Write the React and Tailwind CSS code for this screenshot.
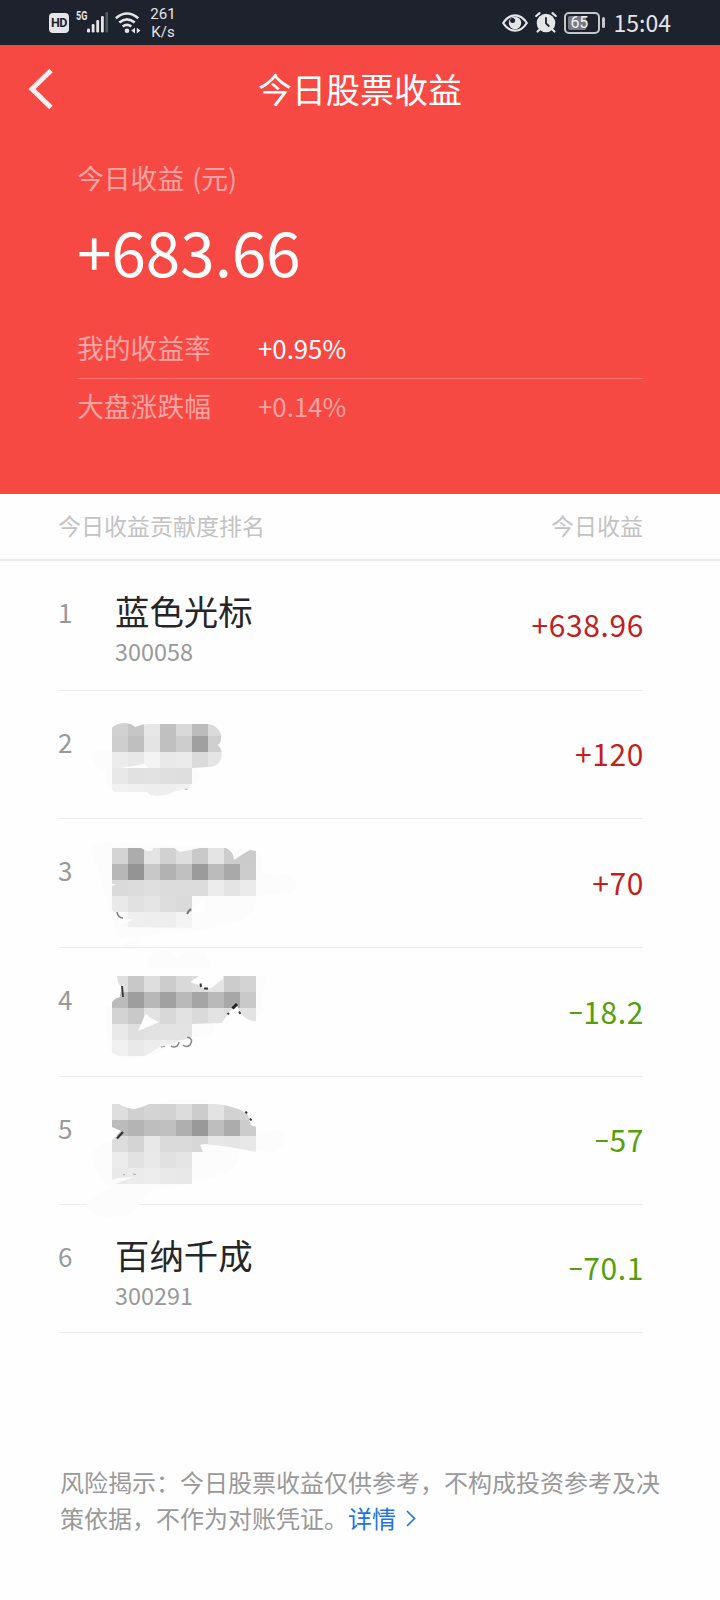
const MOSAICS = {
  2: {
    top: 691,
    height: 127,
    smudges: ["M92 752Q96 750 112 750L196 768Q204 776 196 784L112 790Q104 784 106 772Q92 766 92 752Z"],
    clip: "M112 728Q116 723 126 723Q133 724 135 727Q142 724 148 724L208 724Q218 725 221 735Q222 742 218 745Q223 750 221 759Q218 767 208 767L192 768L192 784L187 789L176 791Q168 795 158 796Q150 796 147 792L114 792L112 790Z",
    holes: ["M120 768L145 764L148 768Z"],
    rows: [
      [720, "#d1d1d1 #c6c6c6 #e7e7e7 #c0c0c0 #d9d9d9 #bcbcbc #dadada"],
      [736, "#cecece #bfbfbf #e4e4e4 #c0c0c0 #cdcdcd #a0a0a0 #cfcfcf"],
      [752, "#ececec #e8e8e8 #f4f4f4 #e9e9e9 #ebebeb #dbdbdb #e5e5e5"],
      [768, "#e8e8e8 #e1e1e1 #e2e2e2 #dfdfdf #dedede #fafafa #fafafa"],
      [784, "#f2f2f2 #f0f0f0 #eeeeee #eeeeee #f1f1f1 #fcfcfc #fcfcfc"],
    ],
    marks: [["M185 789.5L188 789", "#aaa", 0.8]],
  },
  3: {
    top: 819,
    height: 128,
    smudges: [
      "M92 844Q100 840 112 842L256 850Q264 855 263 864L260 873L290 875Q304 886 290 893L256 896L254 910Q240 924 220 926L190 932L118 938L92 850Z",
    ],
    clip: "M112 848L141 848L147 851L152 851L153 848L174 848L180 852L200 848L226 848Q234 852 234 860Q244 853 250 850L256 851L256 896L192 896L192 928L120 927Q126 921 134 920L120 917Q114 914 112 909L112 886L116 884L112 884Z",
    holes: ["M192 908L205 899L205 912L192 912Z"],
    rows: [
      [848, "#d4d4d4 #acacac #e4e4e4 #d1d1d1 #dedede #c9c9c9 #e4e4e4 #cdcdcd #cbcbcb"],
      [864, "#b7b7b7 #949494 #c8c8c8 #b2b2b2 #c0c0c0 #9b9b9b #bbbbbb #a9a9a9 #cccccc"],
      [880, "#dadada #dcdcdc #dfdfdf #dcdcdc #dcdcdc #dcdcdc #ececec #e4e4e4 #ebebeb"],
      [896, "#e9e9e9 #e1e1e1 #e5e5e5 #dddddd #dadada #fafafa"],
      [912, "#fafafa #efefef #eeeeee #eeeeee #f4f4f4 #fcfcfc"],
    ],
    marks: [
      ["M117 912Q118 918 123 918", "#777", 1.5],
      ["M187 914Q189 910 191 909", "#777", 2],
    ],
  },
  4: {
    top: 948,
    height: 128,
    smudges: [
      "M121 947Q126 940 140 942L135 947Z",
      "M148 958Q154 948 168 951L176 958Q190 948 206 954L210 968L146 968Z",
      "M256 976L266 976L262 1000L264 1010L256 1018Z",
      "M106 1005L220 1015L212 1036L192 1037L150 1056L125 1060L110 1050Q104 1030 106 1005Z",
    ],
    clip: "M117 976L199 976L190 982L199 985L203 988L211 988L223 979L223 976L256 976L256 1021Q246 1021 242 1014L237 1006L229 1012L222 1023L192 1024L192 1037L160 1047L145 1056L119 1056L112 1053L112 1002Q115 998 120 997L121 987Q117 982 117 976Z",
    holes: ["M145 1015Q148 1013 149 1017L159 1022L150 1026L138 1031Z"],
    rows: [
      [976, "#dfdfdf #c8c8c8 #dedede #cccccc #d9d9d9 #dddddd #e4e4e4 #cccccc #d3d3d3"],
      [992, "#bbbbbb #9e9e9e #b8b8b8 #a1a1a1 #b9b9b9 #a5a5a5 #b9b9b9 #a7a7a7 #c9c9c9"],
      [1008, "#d3d3d3 #c9c9c9 #e3e3e3 #d8d8d8 #e2e2e2 #dadada #e3e3e3 #dedede #e3e3e3"],
      [1024, "#e9e9e9 #dfdfdf #e2e2e2 #e3e3e3 #e3e3e3 #fafafa"],
      [1040, "#f1f1f1 #e9e9e9 #ededed #eeeeee #f0f0f0"],
    ],
    marks: [
      ["M122 986L123 997", "#333", 1.8],
      ["M200.5 983.5L201 987M204 988.5L208 988.5", "#333", 2],
      ["M232.5 1008.5L237 1004", "#222", 3],
      ["M239 1011.5L240.5 1014M227.5 1014.5L229 1013", "#444", 2],
      ["M171 1046Q174 1048 177 1046Q179 1044 179 1042", "#8a8a8a", 1.6],
      ["M183 1045Q186 1048 190 1045Q192 1042 191.5 1040Q190 1037 187 1037.5", "#8a8a8a", 1.6],
      ["M161 1047L165 1046.5", "#999", 1],
    ],
  },
  5: {
    top: 1077,
    height: 127,
    smudges: [
      "M156 1104Q180 1094 212 1102Z",
      "M112 1142L284 1130Q288 1148 274 1152L240 1150Q240 1166 228 1172L190 1184L150 1192L130 1214Q98 1222 87 1208Q84 1198 112 1188Q96 1178 92 1156Q94 1144 112 1142Z",
    ],
    clip: "M112 1104L119 1104Q128 1109 135 1109Q143 1107 149 1104L216 1104Q240 1107 248 1115L251 1125L256 1127L256 1152L230 1147L205 1144L200 1145L203 1152L192 1152L192 1184L115 1184L134 1177L119 1178L112 1180L112 1140L121 1131L112 1127Z",
    holes: [],
    rows: [
      [1104, "#dedede #d0d0d0 #d4d4d4 #d2d2d2 #dcdcdc #cccccc #e3e3e3 #d2d2d2 #d4d4d4"],
      [1120, "#bbbbbb #b4b4b4 #bebebe #c0c0c0 #afafaf #999999 #bebebe #acacac #cccccc"],
      [1136, "#dddddd #d4d4d4 #e8e8e8 #dadada #dadada #d7d7d7 #e7e7e7 #e5e5e5 #e8e8e8"],
      [1152, "#ececec #e2e2e2 #e9e9e9 #e1e1e1 #e5e5e5 #fafafa"],
      [1168, "#e9e9e9 #ebebeb #ededed #e9e9e9 #e8e8e8"],
    ],
    marks: [
      ["M117 1138.5L123 1132", "#333", 2.2],
      ["M245.5 1111.5L247 1113.5M250 1118.5L251.5 1120.5", "#333", 2],
      ["M123 1175L125 1174.5M133 1174L136 1174.5", "#aaa", 1],
    ],
  },
};

const HOLDINGS = [
  { rank: 1, name: "蓝色光标", code: "300058", profit: "+638.96", height: "h-[130px]" },
  { rank: 2, profit: "+120", height: "h-[128px]" },
  { rank: 3, profit: "+70", height: "h-[129px]" },
  { rank: 4, profit: "−18.2", height: "h-[129px]" },
  { rank: 5, profit: "−57", height: "h-[128px]" },
  { rank: 6, name: "百纳千成", code: "300291", profit: "−70.1", height: "h-[128px]" },
];

// Pixelated cover over a stock name and its code
function Mosaic({ rank }) {
  const { top, height, smudges, clip, holes, rows, marks } = MOSAICS[rank];
  return (
    <svg
      width="200"
      height={height}
      viewBox={`112 ${top} 200 ${height}`}
      className="overflow-visible shrink-0 -ml-[3px]"
    >
      <clipPath id={`mosaic-${rank}`}>
        <path d={clip} />
      </clipPath>
      {smudges.map((d, i) => (
        <path key={i} d={d} fill="#fcfcfc" />
      ))}
      <g clipPath={`url(#mosaic-${rank})`} shapeRendering="crispEdges">
        {rows.map(([y, colors]) =>
          colors.split(" ").map((fill, i) => (
            <rect key={`${y}-${i}`} x={112 + i * 16} y={y} width="16" height="16" fill={fill} />
          ))
        )}
      </g>
      {holes.map((d, i) => (
        <path key={i} d={d} fill="#fefefe" />
      ))}
      {marks.map(([d, stroke, width], i) => (
        <path key={i} d={d} stroke={stroke} strokeWidth={width} fill="none" />
      ))}
    </svg>
  );
}

function Profit({ value }) {
  const gain = value.startsWith("+");
  return (
    <span
      className={`ml-auto self-center flex pb-[3px] text-[30px] leading-none tracking-[0.6px] -mr-px ${
        gain ? "text-[#c21f1f]" : "text-[#559f0c]"
      }`}
    >
      {gain ? (
        value
      ) : (
        <>
          <span className="inline-block origin-right scale-x-[0.82]">{value[0]}</span>
          <span>{value.slice(1)}</span>
        </>
      )}
    </span>
  );
}

function StatusBar() {
  return (
    <div className="h-[45px] bg-[#1e222d] text-[#e4e5e7] flex items-center pl-[49px] pr-[49px]">
      <div className="w-5 h-5 rounded-[4px] bg-[#e4e5e7] text-[#1e222d] text-[12.5px] leading-5 font-bold font-['Roboto',sans-serif] tracking-[-0.5px] text-center mt-px">
        HD
      </div>
      <span className="ml-[7px] mb-[13px] w-[11px] text-[12px] leading-none font-bold font-['Roboto',sans-serif] origin-left scale-x-[0.75]">
        5G
      </span>
      <svg width="21" height="21" viewBox="0 0 21 21" fill="currentColor">
        <rect x="0" y="16.5" width="3" height="4" rx="1.3" />
        <rect x="4.7" y="12" width="2.8" height="8.5" rx="1.2" />
        <rect x="9.3" y="8" width="2.8" height="12.5" rx="1.2" />
        <rect x="14" y="4" width="2.8" height="16.5" rx="1.2" />
        <rect x="18.5" y="0" width="2.6" height="20.5" rx="1.2" fill="#555963" />
      </svg>
      <svg className="ml-[7px]" width="26" height="22" viewBox="0 0 26 22" fill="none" stroke="currentColor" strokeWidth="2.6">
        <path d="M0.8 6.2Q12 -3.2 23.2 6.2" />
        <path d="M4.3 10.6Q12 4 19.7 10.6" />
        <path d="M7.7 14.6Q12 11 16.3 14.6" />
        <circle cx="12" cy="18.8" r="2.3" fill="currentColor" stroke="none" />
        <path d="M20 15.8V21.4L16.3 18.6ZM21.8 15.8V21.4L25.5 18.6Z" fill="currentColor" stroke="none" />
      </svg>
      <div className="ml-[8px] w-7 text-[15px] leading-[18px] text-center font-['Roboto',sans-serif]">
        <div>261</div>
        <div>K/s</div>
      </div>
      <div className="ml-auto flex items-center">
        <svg width="26" height="18" viewBox="0 0 26 18">
          <path d="M1.2 9Q6 1.3 13 1.3T24.8 9Q20 16.7 13 16.7T1.2 9Z" fill="none" stroke="currentColor" strokeWidth="2.2" />
          <circle cx="13" cy="9" r="6.2" fill="currentColor" />
          <circle cx="10.6" cy="6.6" r="2.5" fill="#1e222d" />
        </svg>
        <svg className="ml-[7px]" width="22" height="21" viewBox="0 0 22 21" stroke="currentColor" strokeWidth="2.2" strokeLinecap="round">
          <circle cx="11" cy="11" r="9.3" fill="currentColor" stroke="none" />
          <path d="M1.2 4L4.5 1.2M20.8 4L17.5 1.2" />
          <path d="M4.6 17.5L2.6 19.5M17.4 17.5L19.4 19.5" />
          <path d="M11 6V11.3L13.8 14" fill="none" stroke="#1e222d" strokeWidth="1.8" />
        </svg>
        <div className="ml-[7px] w-9 h-[22px] rounded-[5px] border-2 border-[#c4c6ca] p-[2px] flex">
          <div className="w-[18px] h-[14px] rounded-[2px] bg-[#777a81] text-[16px] leading-[14px] tracking-[-0.3px] text-[#f2f2f2] font-['Roboto',sans-serif] pl-[3px]">
            65
          </div>
        </div>
        <div className="ml-[2px] w-[3px] h-[11px] rounded-full bg-[#c4c6ca]" />
        <span className="ml-[9px] text-[23px] leading-none whitespace-nowrap">15:04</span>
      </div>
    </div>
  );
}

export default function App() {
  return (
    <div className="w-[720px] h-[1600px] overflow-hidden bg-[#fefefe] font-['Noto_Sans_CJK_SC',sans-serif]">
      <StatusBar />

      <div className="h-[449px] bg-[#f64944] text-white">
        <div className="h-[88px] grid grid-cols-[1fr_auto_1fr] items-center">
          <svg className="ml-[28px]" width="26" height="42" viewBox="0 0 26 42" fill="none" stroke="#fff0ef" strokeWidth="5">
            <path d="M23 2.5L4 21L23 39.5" />
          </svg>
          <h1 className="text-[34px] leading-none">今日股票收益</h1>
        </div>

        <div className="pl-[77px] pr-[77px]">
          <p className="pt-[28px] text-[26.8px] leading-[34px] [word-spacing:2px] text-[#fba4a1]">今日收益 (元)</p>
          <p className="mt-[20px] text-[62px] leading-[70px]">+683.66</p>
          <div className="mt-[34px] h-[60px] flex items-center border-b border-[#f8716d]">
            <span className="w-[181px] text-[26.8px]  text-[#fba4a1]">我的收益率</span>
            <span className="text-[25.8px]">+0.95%</span>
          </div>
          <div className="h-[55px] flex items-center text-[#fba4a1]">
            <span className="w-[181px] text-[26.8px]">大盘涨跌幅</span>
            <span className="text-[25.8px]">+0.14%</span>
          </div>
        </div>
      </div>

      <div className="h-[67px] pl-[58px] pr-[77px] pb-[2px] flex items-center justify-between border-b-2 border-[#ebebeb] text-[23px] text-[#c3c3c3]">
        <span>今日收益贡献度排名</span>
        <span>今日收益</span>
      </div>

      <ul className="ml-[58px] mr-[77px]">
        {HOLDINGS.map((h) => (
          <li key={h.rank} className={`${h.height} flex border-b border-[#ececec]`}>
            <span className="w-[57px] pt-[33px] text-[26px] leading-[36px] text-[#999]">{h.rank}</span>
            {h.name ? (
              <div className="pt-[27px]">
                <p className="text-[34.4px] leading-[44px] text-[#262626]">{h.name}</p>
                <p className="mt-[2px] text-[23.4px] leading-[34px] text-[#999]">{h.code}</p>
              </div>
            ) : (
              <Mosaic rank={h.rank} />
            )}
            <Profit value={h.profit} />
          </li>
        ))}
      </ul>

      <div className="mt-[131px] ml-[60px] text-[24px] leading-[36px] text-[#999]">
        <p className="whitespace-nowrap">风险揭示：今日股票收益仅供参考，不构成投资参考及决</p>
        <p className="flex">
          <span>策依据，不作为对账凭证。</span>
          <a className="flex items-center gap-[10px] text-[#1f74e0]">
            详情
            <svg width="10" height="17" viewBox="0 0 10 17" fill="none" stroke="currentColor" strokeWidth="1.6">
              <path d="M1 1L8.5 8.5L1 16" />
            </svg>
          </a>
        </p>
      </div>
    </div>
  );
}
